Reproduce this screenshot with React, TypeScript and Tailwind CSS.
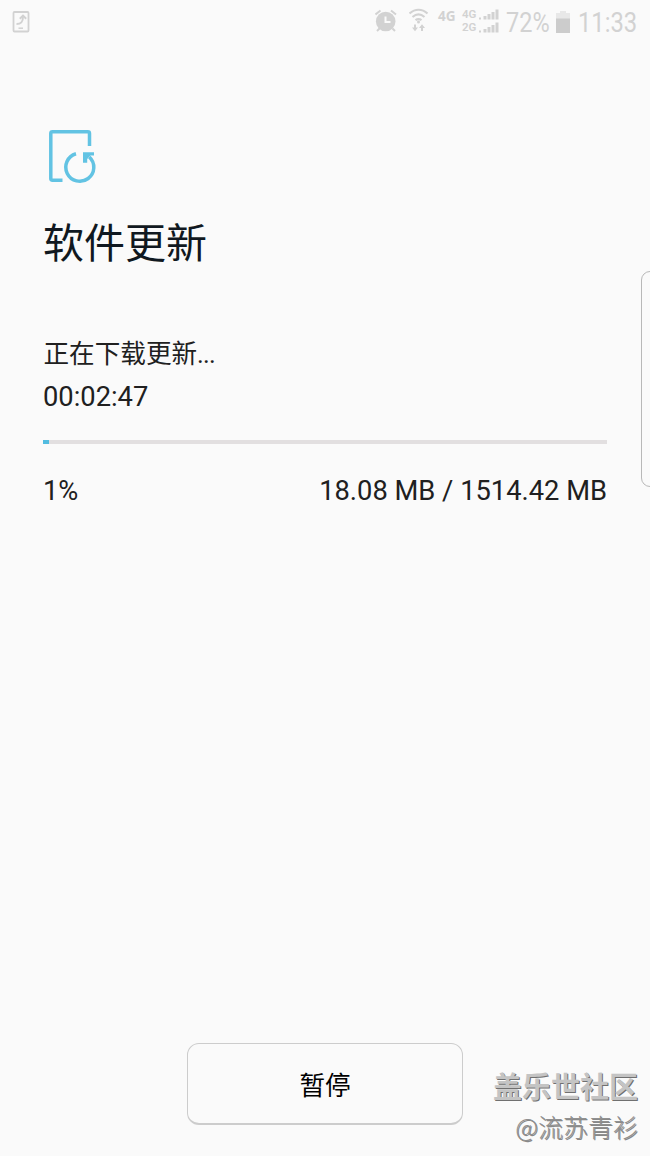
const download = {
  title: '软件更新',
  status: '正在下载更新',
  elapsed: '00:02:47',
  percent: 1,
  size: '18.08 MB / 1514.42 MB',
};

function NoticeIcon() {
  return (
    <svg width="18" height="22" viewBox="0 0 18 22" fill="none" stroke="#d2d2d2" strokeWidth="1.800">
      <rect x="1.500" y="1" width="15" height="19.500" rx="1" />
      <path d="M4.500 13c4.500 0 6.500-1.500 6.500-7.500" strokeWidth="2" />
      <path d="M7.800 7.800 11 4.600l3.200 3.200" strokeWidth="2" />
      <path d="M6.500 17.200H11" strokeWidth="1.500" />
    </svg>
  );
}

function AlarmIcon() {
  return (
    <svg width="22" height="24" viewBox="0 0 22 24" fill="none" stroke="#d2d2d2" strokeWidth="2">
      <circle cx="10.700" cy="13.500" r="9.800" fill="#d2d2d2" stroke="none" />
      <path d="M0.500 6.500 5.500 2.500M21 6.500l-5-4M4.500 20.500 2 23M17.500 20.500l2.500 2.500" />
      <path d="M10.500 8.500V14H15.500" stroke="#fafafa" />
    </svg>
  );
}

function WifiIcon() {
  return (
    <svg width="20" height="24" viewBox="0 0 20 24" fill="none" stroke="#d2d2d2" strokeWidth="2.200">
      <path d="M0.500 5.500c5.500-5 12.500-5 18 0M3.500 9c3.800-3.300 8.200-3.300 12 0M6.500 12.200c2-1.500 4-1.500 6 0" />
      <circle cx="9.500" cy="14" r="1.500" fill="#d2d2d2" stroke="none" />
      <path d="M6 16.500v4M13 23v-4" strokeWidth="2" />
      <path d="M3 19.500h6l-3 3.800zM10 20h6l-3-3.800z" fill="#d2d2d2" stroke="none" />
    </svg>
  );
}

function SignalIcon() {
  return (
    <svg width="20" height="11" viewBox="0 0 20 11" fill="#d2d2d2">
      <rect x="0" y="8.500" width="2" height="2" />
      <rect x="4.500" y="7" width="3" height="3.500" />
      <rect x="8.500" y="5" width="3" height="5.500" />
      <rect x="12.500" y="3" width="3" height="7.500" />
      <rect x="16.500" y="0.500" width="3" height="10" />
    </svg>
  );
}

function BatteryIcon() {
  return (
    <svg width="14" height="22" viewBox="0 0 14 22">
      <path d="M4 0h6v2h4v6H0V2h4z" fill="#e8e8e8" />
      <rect y="7.500" width="14" height="14.500" fill="#cccccc" />
    </svg>
  );
}

function UpdateIcon() {
  return (
    <svg width="52" height="56" viewBox="0 0 52 56" fill="none" stroke="#62c3e3" strokeWidth="3.500">
      <path d="M42.500 17V4.500Q42.500 2.800 40.800 2.800H5.500Q3.800 2.800 3.800 4.500V49.500Q3.800 51.200 5.500 51.200H15.500" />
      <path d="M29 24.800A14 14 0 1 0 42.300 28" />
      <path d="M36 23.300H47V26.500H43.500L40.200 30V33.800H36z" fill="#62c3e3" stroke="none" />
    </svg>
  );
}

function StatusBar() {
  return (
    <header className="flex h-11 items-start pl-3 text-[#d2d2d2]">
      <div className="pt-[11px]">
        <NoticeIcon />
      </div>
      <div className="ml-[345px] flex shrink-0 pt-[8px]">
        <AlarmIcon />
        <div className="ml-[12px]">
          <WifiIcon />
        </div>
      </div>
      <span className="ml-[9px] mt-[9px] w-[24px] font-['Open_Sans'] text-[13.500px] leading-[15px] font-bold">4G</span>
      <div className="mt-[8px] grid w-[38px] shrink-0 gap-[1px] text-[11.500px] font-semibold">
        <div className="flex h-3 items-end leading-3">
          <span className="w-[17px]">4G</span>
          <SignalIcon />
        </div>
        <div className="flex h-3 items-end leading-3">
          <span className="w-[17px]">2G</span>
          <SignalIcon />
        </div>
      </div>
      <span className="ml-[6px] mt-[7px] w-[50px] origin-left scale-x-[0.870] text-[27px] leading-8">72%</span>
      <div className="mt-[11px]">
        <BatteryIcon />
      </div>
      <span className="ml-[8px] mt-[7px] origin-left scale-x-[0.880] text-[27px] leading-8">11:33</span>
    </header>
  );
}

export default function App() {
  return (
    <div className="relative flex h-[1156px] w-[650px] flex-col overflow-hidden bg-[#fafafa] font-[Roboto,'Noto_Sans_CJK_SC',sans-serif] text-[#202020]">
      <StatusBar />

      <main className="flex flex-1 flex-col px-[43px] pt-[85px]">
        <div className="pl-[4px]">
          <UpdateIcon />
        </div>
        <h1 className="mt-[29px] text-[41px] leading-[60px] text-[#101820]">{download.title}</h1>

        <p className="mt-[62px] pl-[0.500px] text-[25.600px] leading-9">
          {download.status}
          <span className="tracking-[-0.800px]">...</span>
        </p>
        <p className="mt-[7px] text-[27.300px] leading-9">{download.elapsed}</p>

        <div className="mt-[25px] h-1 bg-[#e2dfe0]">
          <div className="h-full bg-[#52bce0]" style={{ width: `${download.percent}%` }} />
        </div>
        <div className="mt-[29px] flex justify-between text-[27.300px] leading-9">
          <span>{download.percent}%</span>
          <span>{download.size}</span>
        </div>

        <button
          type="button"
          className="mt-auto mb-[31px] h-[82px] w-[276px] self-center rounded-[12px] border border-[#cccccc] border-b-2 pt-[5px] text-[25.600px] text-black"
        >
          暂停
        </button>
      </main>

      {/* edge panel handle */}
      <div className="absolute top-[271px] -right-[12px] h-[216px] w-[21px] rounded-[9px] border border-[#b8b8b8]" />

      <div className="absolute right-[12px] bottom-[11px] text-right whitespace-nowrap">
        <p className="text-[29px] leading-[38px] font-bold text-[#c4c4c4] [text-shadow:1px_1px_0_#707070]">盖乐世社区</p>
        <p className="font-['Noto_Sans_CJK_SC'] text-[25px] leading-[38px] font-light text-[#909090] [text-shadow:1px_1px_0_#888888]">
          @流苏青衫
        </p>
      </div>
    </div>
  );
}
